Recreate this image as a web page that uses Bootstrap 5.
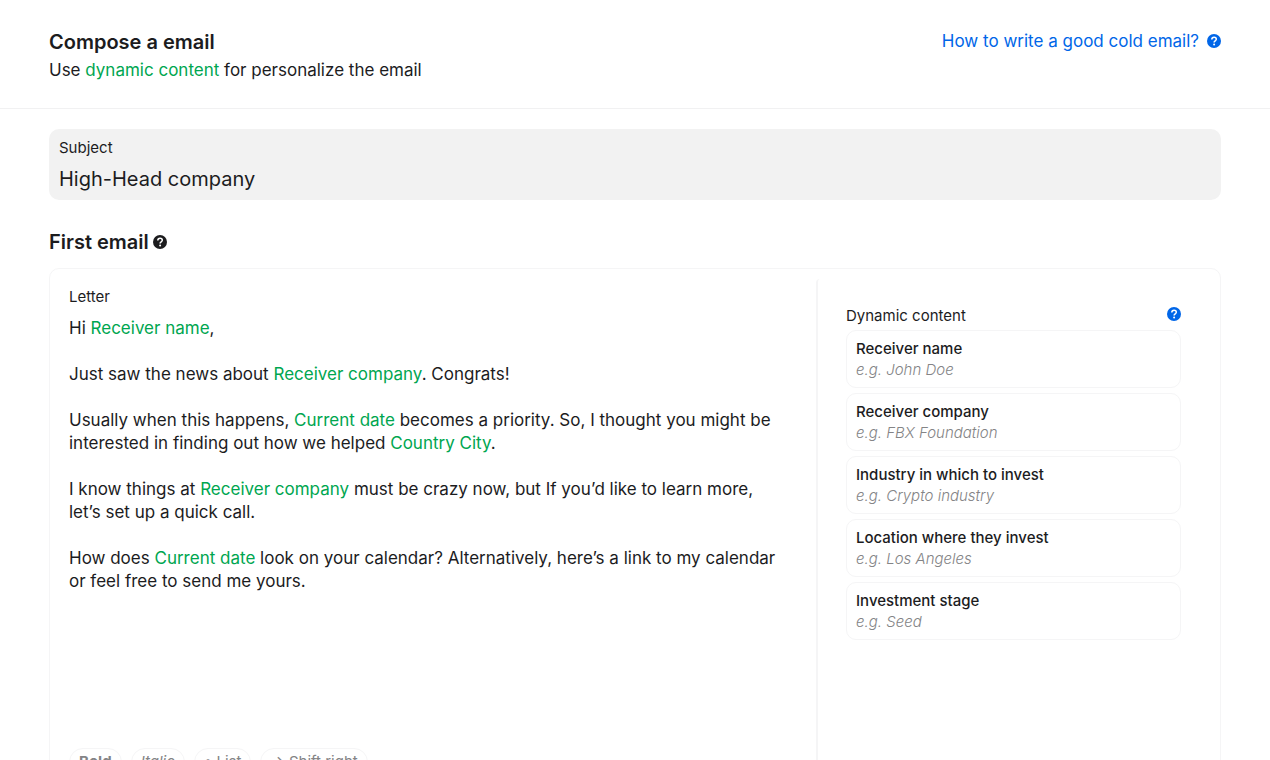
<!DOCTYPE html>
<html lang="en">
<head>
<meta charset="utf-8">
<meta name="viewport" content="width=device-width, initial-scale=1">
<title>Compose a email</title>
<link href="https://cdn.jsdelivr.net/npm/bootstrap@5.3.0/dist/css/bootstrap.min.css" rel="stylesheet">
<style>
  :root { --ink: #1c1c1e; --green: #00a650; --blue: #0066e8; --line: #f5f5f6; --gray: #848486; }
  body { font-family: Inter, "Liberation Sans", sans-serif; color: var(--ink); font-size: 17px; line-height: 23px; }
  .composer { height: 100vh; overflow: hidden; }
  .gutter { padding-left: 49px; padding-right: 49px; }
  .page-head { padding-top: 28px; padding-bottom: 24px; border-bottom: 1px solid #f1f1f2; }
  .title { font-size: 20px; line-height: 28px; font-weight: 600; margin: 0; }
  .subtitle { line-height: 28px; }
  .token { color: var(--green); text-decoration: none; }
  .guide { color: var(--blue); line-height: 26px; }
  .caption { font-size: 15px; line-height: 21px; }
  .subject { background: #f2f2f2; border-radius: 10px; margin-top: 20px; padding: 8px 10px; }
  .subject input { font-size: 20px; line-height: 26px; color: var(--ink); outline: 0; margin-top: 8px; }
  .section-head { margin-top: 28px; margin-bottom: 12px; }
  .editor { border: 1px solid var(--line); border-radius: 10px; }
  .letter { padding: 17px 29px 20px 19px; min-width: 0; }
  .letter-text { min-height: 431px; margin-top: 10px; outline: 0; }
  .letter-text p { margin-bottom: 23px; }
  .tools { gap: 9px; }
  .pill { border: 1px solid var(--line); border-radius: 14px; background: #fff; color: var(--gray); font-size: 15px; line-height: 26px; padding: 0 9px; }
  .side { flex: 0 0 404px; margin: 10px 0; padding: 26px 39px 26px 28px; border-left: 2px solid var(--line); border-top-left-radius: 4px; }
  .field-list { gap: 5px; margin-top: 4px; }
  .field-card { border: 1px solid var(--line); border-radius: 10px; background: #fff; color: var(--ink); font-size: 15px; line-height: 21px; padding: 7px 9px; }
  .field-card em { color: var(--gray); font-weight: 300; }
  .help { background: none; line-height: 0; }
</style>
</head>
<body>
<svg class="d-none">
  <symbol id="help" viewBox="0 0 14 14">
    <circle cx="7" cy="7" r="7" fill="currentColor"/>
    <path d="M4.8 5.5C4.8 4 5.8 3.2 7.1 3.2s2.2.8 2.2 2.1c0 1.5-2.2 1.5-2.2 3.1" fill="none" stroke="#fff" stroke-width="1.5"/>
    <circle cx="7.1" cy="10.4" r="1" fill="#fff"/>
  </symbol>
</svg>
<div class="composer">
  <header class="page-head gutter d-flex justify-content-between align-items-start">
    <div>
      <h1 class="title">Compose a email</h1>
      <p class="subtitle mb-0">Use <a href="#fields" class="token">dynamic content</a> for personalize the email</p>
    </div>
    <a href="#guide" class="guide d-flex align-items-center gap-2 text-decoration-none">How to write a good cold email? <svg width="14" height="14" aria-hidden="true"><use href="#help"/></svg></a>
  </header>

  <main class="gutter">
    <div class="subject">
      <label for="subject" class="caption d-block">Subject</label>
      <input id="subject" type="text" class="d-block w-100 border-0 bg-transparent p-0" value="High-Head company">
    </div>

    <div class="section-head d-flex align-items-center">
      <h2 class="title">First email</h2>
      <button type="button" class="help border-0 p-0 ms-1 text-reset" aria-label="About the first email"><svg width="14" height="14"><use href="#help"/></svg></button>
    </div>

    <div class="editor d-flex">
      <section class="letter flex-grow-1">
        <div id="letter-label" class="caption">Letter</div>
        <div class="letter-text" contenteditable="true" role="textbox" aria-multiline="true" aria-labelledby="letter-label" spellcheck="false">
          <p>Hi <span class="token">Receiver name</span>,</p>
          <p>Just saw the news about <span class="token">Receiver company</span>. Congrats!</p>
          <p>Usually when this happens, <span class="token">Current date</span> becomes a priority. So, I thought you might be interested in finding out how we helped <span class="token">Country City</span>.</p>
          <p>I know things at <span class="token">Receiver company</span> must be crazy now, but If you’d like to learn more, let’s set up a quick call.</p>
          <p>How does <span class="token">Current date</span> look on your calendar? Alternatively, here’s a link to my calendar or feel free to send me yours.</p>
        </div>
        <div class="tools d-flex">
          <button type="button" class="pill fw-bold">Bold</button>
          <button type="button" class="pill fst-italic">Italic</button>
          <button type="button" class="pill">• List</button>
          <button type="button" class="pill">-&gt; Shift right</button>
        </div>
      </section>

      <aside class="side" id="fields">
        <div class="caption d-flex justify-content-between align-items-center">
          <span>Dynamic content</span>
          <button type="button" class="help guide border-0 p-0 pb-1" aria-label="About dynamic content"><svg class="d-block" width="14" height="14"><use href="#help"/></svg></button>
        </div>
        <div class="field-list d-flex flex-column">
          <button type="button" class="field-card text-start"><span class="d-block fw-medium">Receiver name</span><em class="d-block">e.g. John Doe</em></button>
          <button type="button" class="field-card text-start"><span class="d-block fw-medium">Receiver company</span><em class="d-block">e.g. FBX Foundation</em></button>
          <button type="button" class="field-card text-start"><span class="d-block fw-medium">Industry in which to invest</span><em class="d-block">e.g. Crypto industry</em></button>
          <button type="button" class="field-card text-start"><span class="d-block fw-medium">Location where they invest</span><em class="d-block">e.g. Los Angeles</em></button>
          <button type="button" class="field-card text-start"><span class="d-block fw-medium">Investment stage</span><em class="d-block">e.g. Seed</em></button>
        </div>
      </aside>
    </div>
  </main>
</div>
<script src="https://cdn.jsdelivr.net/npm/bootstrap@5.3.0/dist/js/bootstrap.bundle.min.js"></script>
</body>
</html>
